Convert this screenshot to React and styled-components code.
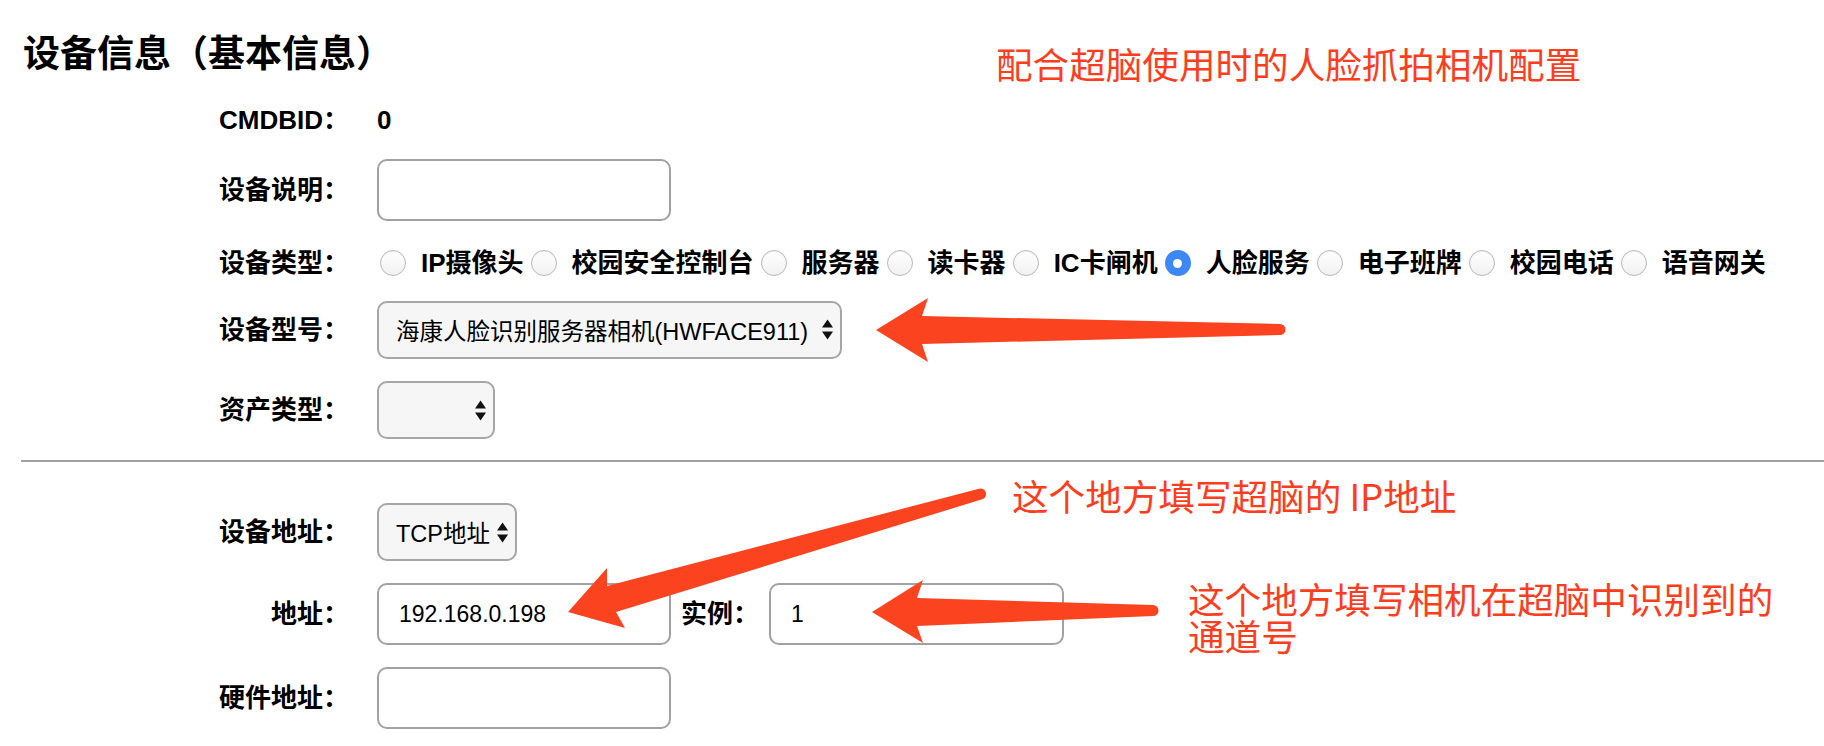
import styled, { createGlobalStyle } from "styled-components";

const GlobalStyle = createGlobalStyle`
  html, body {
    margin: 0;
    padding: 0;
    background: #fff;
  }
  body {
    font-family: "Liberation Sans", "Noto Sans CJK SC", sans-serif;
    color: #000;
    overflow: hidden;
  }
`;

const Page = styled.div`
  position: relative;
  width: 1824px;
  height: 746px;
  padding-top: 35px;
  box-sizing: border-box;
`;

const Title = styled.h1`
  margin: 0 0 0 23px;
  font-size: 37px;
  line-height: 40px;
  font-weight: 700;
`;

const Row = styled.div`
  display: grid;
  grid-template-columns: 349px auto;
  column-gap: 28px;
  align-items: center;
  justify-content: start;
  height: ${(p) => p.$h}px;
  margin-top: ${(p) => p.$mt}px;
`;

const Label = styled.div`
  text-align: right;
  font-size: 26px;
  line-height: 30px;
  font-weight: 700;
  white-space: nowrap;
`;

const Value = styled.div`
  font-size: 26px;
  font-weight: 700;
  line-height: 30px;
`;

const Divider = styled.div`
  height: 2px;
  background: #a0a0a0;
  margin: 21px 0 0 21px;
`;

const Field = styled.div`
  display: flex;
  align-items: center;
`;

const TextBox = styled.input`
  box-sizing: border-box;
  width: ${(p) => p.$w}px;
  height: 62px;
  border: 2px solid #a2a2a2;
  border-radius: 10px;
  padding: 0 20px;
  margin: 0;
  font-family: "Liberation Sans", "Noto Sans CJK SC", sans-serif;
  font-size: 23px;
  color: #000;
  background: #fff;
  outline: none;
`;

const SelectBox = styled.div`
  box-sizing: border-box;
  width: ${(p) => p.$w}px;
  height: 58px;
  border: 2px solid #a6a6a6;
  border-radius: 10px;
  background: #f6f6f6;
  display: flex;
  align-items: center;
  padding: 0 7px 0 17px;
  font-family: "Liberation Sans", "Noto Sans CJK SC", sans-serif;
  font-size: 23.5px;
  color: #000;
  white-space: nowrap;
`;

const SelectText = styled.span`
  flex: 1;
`;

const InlineLabel = styled(Label)`
  margin: 0 10px 0 10px;
`;

const RadioGroup = styled.div`
  display: flex;
  align-items: center;
  margin-left: 3px;
`;

const Radio = styled.span`
  box-sizing: border-box;
  width: 26px;
  height: 26px;
  border-radius: 50%;
  flex-shrink: 0;
  display: flex;
  align-items: center;
  justify-content: center;
  border: ${(p) => (p.$checked ? "none" : "1px solid #b9b9b9")};
  background: ${(p) =>
    p.$checked ? "#3d88f6" : "linear-gradient(#ffffff, #f1f1f1)"};
  box-shadow: ${(p) =>
    p.$checked ? "none" : "inset 0 1px 1px rgba(0,0,0,0.06)"};

  &::after {
    content: "";
    display: ${(p) => (p.$checked ? "block" : "none")};
    width: 9px;
    height: 9px;
    border-radius: 50%;
    background: #fff;
  }
`;

const RadioText = styled.span`
  font-size: 26px;
  line-height: 30px;
  font-weight: 700;
  margin: 0 7px 0 15px;
  white-space: nowrap;
`;

const Overlay = styled.svg`
  position: absolute;
  left: 0;
  top: 0;
  pointer-events: none;
`;

const Note = styled.div`
  position: absolute;
  left: ${(p) => p.$x}px;
  top: ${(p) => p.$y}px;
  font-family: "Noto Sans CJK SC", "Liberation Sans", sans-serif;
  font-size: 36.6px;
  line-height: 37px;
  font-weight: 400;
  color: #fd3d1d;
  white-space: nowrap;
`;

function Stepper() {
  return (
    <svg width="11" height="21" viewBox="0 0 11 21">
      <path d="M0 8.5 L5.5 0.5 L11 8.5 Z" fill="#111" />
      <path d="M0 12.5 L11 12.5 L5.5 20.5 Z" fill="#111" />
    </svg>
  );
}

function Select({ width, text }) {
  return (
    <SelectBox $w={width}>
      <SelectText>{text}</SelectText>
      <Stepper />
    </SelectBox>
  );
}

const deviceTypes = [
  "IP摄像头",
  "校园安全控制台",
  "服务器",
  "读卡器",
  "IC卡闸机",
  "人脸服务",
  "电子班牌",
  "校园电话",
  "语音网关",
];

export default function App() {
  return (
    <>
      <GlobalStyle />
      <Page>
        <Title>设备信息（基本信息）</Title>

        <Row $h={40} $mt={25}>
          <Label>CMDBID：</Label>
          <Value>0</Value>
        </Row>

        <Row $h={63} $mt={18}>
          <Label>设备说明：</Label>
          <TextBox $w={294} readOnly value="" />
        </Row>

        <Row $h={40} $mt={22}>
          <Label>设备类型：</Label>
          <RadioGroup>
            {deviceTypes.map((t) => (
              <Field key={t}>
                <Radio $checked={t === "人脸服务"} />
                <RadioText>{t}</RadioText>
              </Field>
            ))}
          </RadioGroup>
        </Row>

        <Row $h={59} $mt={17}>
          <Label>设备型号：</Label>
          <Select width={465} text="海康人脸识别服务器相机(HWFACE911)" />
        </Row>

        <Row $h={58} $mt={22}>
          <Label>资产类型：</Label>
          <Select width={118} text="" />
        </Row>

        <Divider />

        <Row $h={58} $mt={41}>
          <Label>设备地址：</Label>
          <Select width={140} text="TCP地址" />
        </Row>

        <Row $h={62} $mt={22}>
          <Label>地址：</Label>
          <Field>
            <TextBox $w={294} readOnly value="192.168.0.198" />
            <InlineLabel>实例：</InlineLabel>
            <TextBox $w={295} readOnly value="1" />
          </Field>
        </Row>

        <Row $h={62} $mt={22}>
          <Label>硬件地址：</Label>
          <TextBox $w={294} readOnly value="" />
        </Row>

        <Overlay width="1824" height="746" viewBox="0 0 1824 746">
          <path
            d="M876 330 L928 298 L922 316 L1280 324 A5.5 5.5 0 0 1 1280 335 L922 344 L928 362 Z"
            fill="#fc4320"
          />
          <path
            d="M568 612 L607 568 L607 586 L978 489 A5 5 0 0 1 983 499 L616 612 L625 628 Z"
            fill="#fc4320"
          />
          <path
            d="M872 612 L923 580 L917 598 L1153 605 A5.5 5.5 0 0 1 1153 616 L917 626 L923 643 Z"
            fill="#fc4320"
          />
        </Overlay>

        <Note $x={996} $y={45}>配合超脑使用时的人脸抓拍相机配置</Note>
        <Note $x={1012} $y={477}>这个地方填写超脑的 IP地址</Note>
        <Note $x={1188} $y={580}>
          这个地方填写相机在超脑中识别到的
          <br />
          通道号
        </Note>
      </Page>
    </>
  );
}
